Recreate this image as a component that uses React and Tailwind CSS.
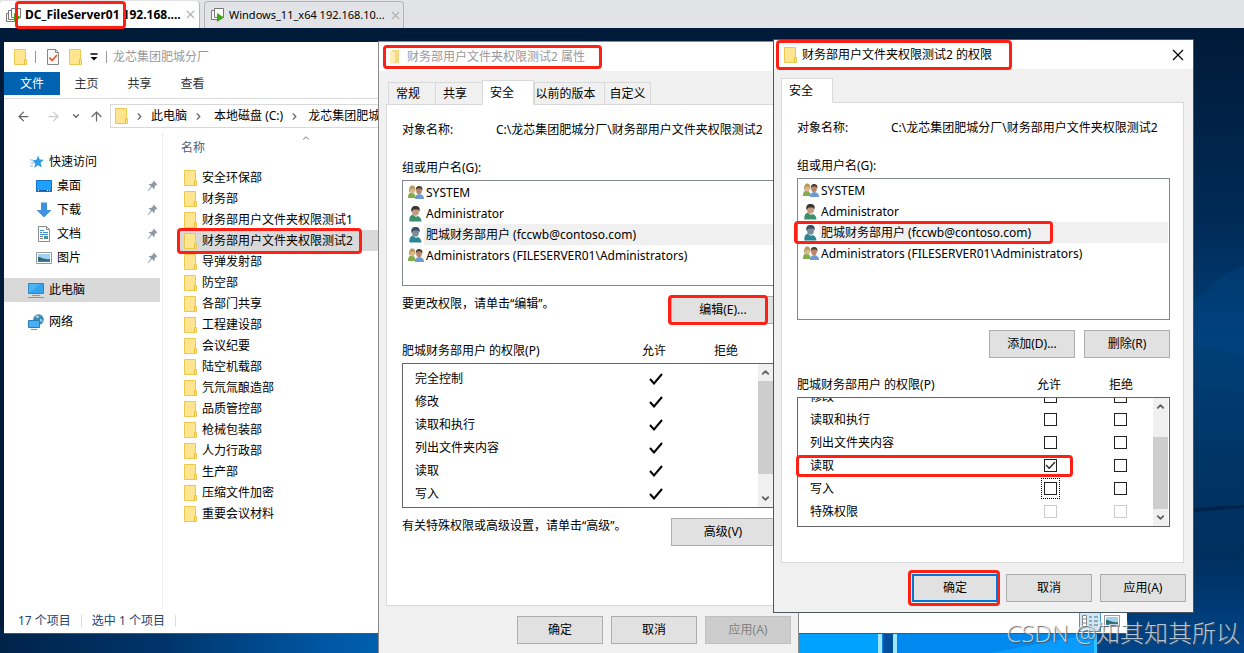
import React, { useState } from 'react';
import { ArrowLeft, ArrowRight, ArrowUp, ChevronDown, ChevronRight, ChevronUp, X } from 'lucide-react';

const FILES = [
    '安全环保部',
    '财务部',
    '财务部用户文件夹权限测试1',
    '财务部用户文件夹权限测试2',
    '导弹发射部',
    '防空部',
    '各部门共享',
    '工程建设部',
    '会议纪要',
    '陆空机载部',
    '氕氘氚酿造部',
    '品质管控部',
    '枪械包装部',
    '人力行政部',
    '生产部',
    '压缩文件加密',
    '重要会议材料',
];

const QUICK_ACCESS = [
    { name: '桌面', icon: <DesktopIcon /> },
    { name: '下载', icon: <DownloadIcon /> },
    { name: '文档', icon: <DocumentIcon /> },
    { name: '图片', icon: <PictureIcon /> },
];

const USERS = [
    { name: 'SYSTEM', group: true },
    { name: 'Administrator' },
    { name: '肥城财务部用户 (fccwb@contoso.com)', selected: true },
    { name: 'Administrators (FILESERVER01\\Administrators)', group: true },
];

const PATH = 'C:\\龙芯集团肥城分厂\\财务部用户文件夹权限测试2';

export default function App() {
    return (
        <div className="h-screen flex flex-col overflow-hidden text-xs text-black whitespace-nowrap font-['Noto_Sans','Noto_Sans_CJK_SC',sans-serif]">
            <VmTabs />
            <main className="relative flex-1 overflow-hidden bg-[#001b3a]">
                <Wallpaper />
                <Explorer />
                <PropertiesDialog />
                <PermissionsDialog />
                <div className="absolute right-1 bottom-1 text-2xl leading-8 font-light text-white/70 font-['Open_Sans','Noto_Sans_CJK_SC',sans-serif] [text-shadow:1px_1px_1px_#555]">
                    CSDN @知其知其所以
                </div>
            </main>
        </div>
    );
}

/* Console tabs of the virtual machines */
function VmTabs() {
    return (
        <nav className="h-7 shrink-0 flex items-end gap-1 bg-[#e1e3e6]">
            <a href="#dc" className="h-[27px] w-[200px] pl-1.5 pr-1 flex items-center gap-[3px] bg-white border-r border-[#b5b5b5] rounded-t font-bold">
                <VmIcon stacked />
                <span className="relative">
                    DC_FileServer01
                    <Mark className="-left-2.5 -right-1.5 -top-1.5 -bottom-1.5" />
                </span>
                <span>192.168....</span>
                <X size={13} className="ml-auto shrink-0 text-[#b0b0b0]" />
            </a>
            <a href="#win11" className="h-[27px] w-[200px] pl-1 pr-1 flex items-center gap-1 border border-b-0 border-[#b5b5b5] rounded-t bg-[#e1e3e6] text-[11px]">
                <VmIcon />
                <span>Windows_11_x64 192.168.10...</span>
                <X size={13} className="ml-auto shrink-0 text-[#b0b0b0]" />
            </a>
        </nav>
    );
}

function Explorer() {
    const [selected, setSelected] = useState(3);

    return (
        <section className="absolute left-1 right-[117px] top-3.5 bottom-[19px] flex flex-col bg-white border-b border-[#3a5a7a]">
            {/* Title bar */}
            <header className="h-[30px] shrink-0 pl-2.5 flex items-center text-[#999]">
                <FolderIcon />
                <i className="w-px h-3 bg-[#999] ml-2 mr-[11px]" />
                <CheckDocIcon />
                <span className="w-2.5" />
                <FolderIcon />
                <svg width="8" height="8" viewBox="0 0 8 8" className="ml-2 mr-2">
                    <path d="M0.500 1h7" stroke="#000" strokeWidth="1.500" />
                    <path d="M0.500 4h7L4 7.500z" fill="#000" />
                </svg>
                <i className="w-px h-3 bg-[#999] mr-1.5" />
                <span>龙芯集团肥城分厂</span>
            </header>

            {/* Ribbon */}
            <nav className="h-[27px] shrink-0 flex border-b border-[#dadbdc]">
                <button className="w-14 h-[23px] bg-[#0063b1] text-white">文件</button>
                {['主页', '共享', '查看'].map((tab) => (
                    <button key={tab} className="w-[53px] h-[23px] text-[#333]">{tab}</button>
                ))}
            </nav>

            {/* Address bar */}
            <div className="h-[34px] shrink-0 flex items-center pl-3 text-[#666]">
                <ArrowLeft size={15} />
                <ArrowRight size={15} className="ml-[15px] text-[#ccc]" />
                <ChevronDown size={10} strokeWidth={3} className="ml-2.5" />
                <ArrowUp size={15} className="ml-2" />
                <div className="flex-1 h-6 ml-1.5 pl-1 flex items-center border border-[#d9d9d9] text-black">
                    <FolderIcon />
                    <ChevronRight size={11} strokeWidth={2.500} className="mx-1.5 text-[#666]" />
                    <span>此电脑</span>
                    <ChevronRight size={11} strokeWidth={2.500} className="mx-1.5 text-[#666]" />
                    <span className="ml-1">本地磁盘 (C:)</span>
                    <ChevronRight size={11} strokeWidth={2.500} className="mx-1.5 text-[#666]" />
                    <span className="ml-0.5">龙芯集团肥城分厂</span>
                </div>
            </div>

            <div className="flex-1 min-h-0 flex">
                <aside className="w-[159px] shrink-0 pt-[17px] pr-0.5 border-r border-[#eee]">
                    <a href="#quick" className="h-6 pl-[26px] flex items-center gap-[5px]">
                        <StarIcon />
                        快速访问
                    </a>
                    {QUICK_ACCESS.map((item) => (
                        <a key={item.name} href="#quick" className="h-6 pl-8 pr-0.5 flex items-center gap-[5px]">
                            {item.icon}
                            {item.name}
                            <PinIcon />
                        </a>
                    ))}
                    <a href="#pc" className="h-6 mt-2 mb-2 pl-6 flex items-center gap-[5px] bg-[#d9d9d9]">
                        <ComputerIcon />
                        此电脑
                    </a>
                    <a href="#network" className="h-6 pl-6 flex items-center gap-[5px]">
                        <NetworkIcon />
                        网络
                    </a>
                </aside>

                <div className="flex-1 pl-[17px]">
                    <div className="h-[34px] flex">
                        <span className="pt-[7px] pl-px leading-4 text-[#44617f]">名称</span>
                        <ChevronUp size={10} className="ml-24 text-[#555]" />
                    </div>
                    <ul>
                        {FILES.map((name, i) => (
                            <li key={name}>
                                <button
                                    onClick={() => setSelected(i)}
                                    className={`w-full h-[21px] pl-1 flex items-center ${i === selected ? 'bg-[#d9d9d9]' : ''}`}
                                >
                                    <span className="relative flex items-center gap-[5px]">
                                        <FolderIcon />
                                        {name}
                                        {i === 3 && <Mark className="-left-[7px] -right-[9px] -top-[5px] -bottom-[5px]" />}
                                    </span>
                                </button>
                            </li>
                        ))}
                    </ul>
                </div>
            </div>

            {/* Status bar */}
            <footer className="h-6 shrink-0 pl-3.5 pr-1 flex items-center text-[#26466d]">
                <span>17 个项目</span>
                <i className="w-px h-3 bg-[#ddd] mx-2.5" />
                <span>选中 1 个项目</span>
                <i className="w-px h-3 bg-[#ddd] mx-2.5" />
                <button aria-label="详细信息" className="ml-auto w-[22px] h-[22px] grid place-items-center bg-[#cce8f6] border border-[#3f9fd5]">
                    <svg width="16" height="12" viewBox="0 0 16 12">
                        <path d="M0.500 0.500h4v11h-4zM0.500 4h4M0.500 8h4" fill="#fff" stroke="#888" />
                        <path d="M7 2h3M12 2h4M7 6h3M12 6h4M7 10h3M12 10h4" stroke="#666" />
                    </svg>
                </button>
                <button aria-label="大图标" className="w-[22px] h-[22px] grid place-items-center">
                    <PictureIcon />
                </button>
            </footer>
        </section>
    );
}

function PropertiesDialog() {
    const rows = ['完全控制', '修改', '读取和执行', '列出文件夹内容', '读取', '写入'];

    return (
        <section className="absolute left-[378px] top-[13px] w-[421px] bg-[#f0f0f0] border border-[#8a8a8a]">
            <header className="h-[29px] pl-2.5 flex items-center bg-white text-[#999]">
                <h2 className="relative flex items-center gap-[5px]">
                    <FolderIcon open />
                    财务部用户文件夹权限测试2 属性
                    <Mark className="-left-1.5 -right-[17px] -top-1 -bottom-1" />
                </h2>
            </header>
            <div className="px-[7px] pt-[9px] pb-[9px]">
                <div className="flex items-end pl-0.5">
                    <Tab className="w-12">常规</Tab>
                    <Tab className="w-12">共享</Tab>
                    <Tab active className="w-[52px]">安全</Tab>
                    <Tab className="w-[71px]">以前的版本</Tab>
                    <Tab className="w-[47px]">自定义</Tab>
                </div>
                <div className="-mt-px px-[15px] pt-[17px] pb-[59px] bg-white border border-[#d9d9d9]">
                    <ObjectName />
                    <UserList className="h-[106px]" />
                    <div className="mt-2.5 flex items-start justify-between">
                        <p className="leading-4">要更改权限，请单击“编辑”。</p>
                        <div className="relative">
                            <PushButton wide>编辑(E)...</PushButton>
                            <Mark className="-left-[3px] right-[7px] -top-px -bottom-px" />
                        </div>
                    </div>
                    <PermissionHead />
                    <div className="mt-1 h-[145px] flex border border-[#646464] overflow-hidden">
                        <div className="flex-1 pt-[3px]">
                            <table className="w-full table-fixed">
                                <tbody>
                                    {rows.map((row) => (
                                        <tr key={row} className="h-[23px]">
                                            <th scope="row" className="pl-3 text-left font-normal">{row}</th>
                                            <td className="w-[75px]">
                                                <svg width="14" height="12" viewBox="0 0 14 12" className="mx-auto">
                                                    <path d="M1 6l4 4.500L13 1" fill="none" stroke="#000" strokeWidth="2" />
                                                </svg>
                                            </td>
                                            <td className="w-[65px]" />
                                        </tr>
                                    ))}
                                </tbody>
                            </table>
                        </div>
                        <ScrollBar>
                            <div className="h-[93px] bg-[#cdcdcd]" />
                            <div className="flex-1" />
                        </ScrollBar>
                    </div>
                    <div className="mt-2.5 flex items-start justify-between">
                        <p className="leading-4">有关特殊权限或高级设置，请单击“高级”。</p>
                        <PushButton wide>高级(V)</PushButton>
                    </div>
                </div>
                <div className="mt-2.5 flex justify-end gap-2">
                    <PushButton>确定</PushButton>
                    <PushButton>取消</PushButton>
                    <PushButton disabled>应用(A)</PushButton>
                </div>
            </div>
        </section>
    );
}

function PermissionsDialog() {
    const rows = [
        { name: '修改' },
        { name: '读取和执行' },
        { name: '列出文件夹内容' },
        { name: '读取', allow: true, marked: true },
        { name: '写入', focused: true },
        { name: '特殊权限', disabled: true },
    ];

    return (
        <section className="absolute left-[773px] top-[11px] w-[421px] bg-[#f0f0f0] border border-[#4a5560]">
            <header className="h-[29px] pl-2.5 pr-[9px] flex items-center justify-between bg-white">
                <h2 className="relative flex items-center gap-[5px]">
                    <FolderIcon />
                    财务部用户文件夹权限测试2 的权限
                    <Mark className="-left-2 -right-5 -top-[7px] -bottom-[7px]" />
                </h2>
                <button aria-label="关闭">
                    <svg width="12" height="12" viewBox="0 0 12 12">
                        <path d="M1 1l10 10M11 1L1 11" stroke="#000" strokeWidth="1.200" />
                    </svg>
                </button>
            </header>
            <div className="px-[7px] pt-[9px] pb-2.5">
                <div className="flex items-end">
                    <Tab active className="w-[52px]">安全</Tab>
                </div>
                <div className="-mt-px mr-0.5 pl-[15px] pr-[13px] pt-[17px] pb-[35px] bg-white border border-[#d9d9d9]">
                    <ObjectName />
                    <UserList className="h-[142px]" marked />
                    <div className="mt-2.5 flex justify-end gap-[9px]">
                        <PushButton>添加(D)...</PushButton>
                        <PushButton>删除(R)</PushButton>
                    </div>
                    <PermissionHead />
                    {/* Scrolled to the end, the first row is cut by the frame */}
                    <div className="mt-1 h-[130px] flex border border-[#646464]">
                        <div className="flex-1 flex items-end pb-[3px] overflow-y-clip">
                            <table className="w-full table-fixed">
                                <tbody>
                                    {rows.map((row) => (
                                        <tr key={row.name} className="relative h-[23px]">
                                            <th scope="row" className="pl-3 text-left font-normal">
                                                {row.name}
                                                {row.marked && <Mark className="-left-0.5 right-20 top-px bottom-0" />}
                                            </th>
                                            <td className="w-[75px]">
                                                <CheckBox
                                                    label={`${row.name} 允许`}
                                                    checked={row.allow}
                                                    focused={row.focused}
                                                    disabled={row.disabled}
                                                />
                                            </td>
                                            <td className="w-[65px]">
                                                <CheckBox label={`${row.name} 拒绝`} disabled={row.disabled} />
                                            </td>
                                        </tr>
                                    ))}
                                </tbody>
                            </table>
                        </div>
                        <ScrollBar>
                            <div className="flex-1" />
                            <div className="h-[72px] bg-[#cdcdcd]" />
                        </ScrollBar>
                    </div>
                </div>
                <div className="mt-[11px] flex justify-end gap-2">
                    <div className="relative">
                        <PushButton primary>确定</PushButton>
                        <Mark className="-left-1 -right-0.5 -top-1 -bottom-1" />
                    </div>
                    <PushButton>取消</PushButton>
                    <PushButton>应用(A)</PushButton>
                </div>
            </div>
        </section>
    );
}

function Tab({ active, className, children }) {
    return (
        <button
            className={`shrink-0 border border-[#d9d9d9] ${className} ${active ? 'relative h-[25px] pr-3 bg-white border-b-white' : 'h-[23px] -mr-px pr-2 last:pr-0 bg-[#f0f0f0]'}`}
        >
            {children}
        </button>
    );
}

function ObjectName() {
    return (
        <>
            <dl className="flex leading-4">
                <dt className="w-[94px]">对象名称:</dt>
                <dd>{PATH}</dd>
            </dl>
            <p className="mt-[22px] leading-4">组或用户名(G):</p>
        </>
    );
}

function UserList({ className, marked }) {
    return (
        <ul className={`mt-1 p-px border border-[#828790] ${className}`}>
            {USERS.map((user) => (
                <li key={user.name} className="h-[21px] pl-[3px] flex items-center">
                    <span className="w-[17px]">{user.group ? <GroupIcon /> : <UserIcon blue={user.selected} />}</span>
                    <span className={`flex-1 h-full pl-0.5 leading-[21px] ${user.selected ? 'bg-[#f0f0f0]' : ''}`}>
                        <span className="relative inline-block h-full">
                            {user.name}
                            {marked && user.selected && <Mark className="-left-[27px] -right-[22px] -top-px -bottom-px" />}
                        </span>
                    </span>
                </li>
            ))}
        </ul>
    );
}

function PermissionHead() {
    return (
        <div className="mt-[19px] pr-[13px] flex leading-4">
            <span className="flex-1">肥城财务部用户 的权限(P)</span>
            <span className="w-[72px] text-center">允许</span>
            <span className="w-[72px] text-center">拒绝</span>
        </div>
    );
}

function PushButton({ wide, primary, disabled, children }) {
    return (
        <button
            disabled={disabled}
            className={`block h-7 ${wide ? 'w-[104px]' : 'w-[86px]'} ${primary
                ? 'bg-[#e1e1e1] border-2 border-[#0078d7]'
                : disabled
                    ? 'bg-[#ccc] border border-[#bfbfbf] text-[#838383]'
                    : 'bg-[#e1e1e1] border border-[#adadad]'
                }`}
        >
            {children}
        </button>
    );
}

function CheckBox({ label, checked, focused, disabled }) {
    return (
        <label className={`relative mx-auto flex w-[19px] h-[21px] items-center justify-center ${focused ? 'border border-dotted border-black' : ''}`}>
            <input
                type="checkbox"
                aria-label={label}
                defaultChecked={checked}
                disabled={disabled}
                className="peer appearance-none size-[13px] bg-white border border-[#222] disabled:border-[#ccc]"
            />
            <svg viewBox="0 0 13 13" className="absolute size-[13px] hidden peer-checked:block pointer-events-none">
                <path d="M2 6l3.200 3.200L11 3" fill="none" stroke="#222" strokeWidth="1.300" />
            </svg>
        </label>
    );
}

function ScrollBar({ children }) {
    return (
        <div className="w-[15px] mr-px flex flex-col bg-[#f0f0f0] text-[#606060]">
            <div className="h-[17px] grid place-items-center"><ChevronUp size={11} strokeWidth={4} /></div>
            {children}
            <div className="h-[17px] grid place-items-center"><ChevronDown size={11} strokeWidth={4} /></div>
        </div>
    );
}

/* Red frame around the spot to look at */
function Mark({ className }) {
    return <span className={`absolute z-10 border-3 border-[#ff2015] rounded-sm pointer-events-none ${className}`} />;
}

function Wallpaper() {
    return (
        <svg className="absolute inset-0 w-full h-full" viewBox="0 0 1244 625" preserveAspectRatio="none">
            <defs>
                <linearGradient id="floor" x1="0" x2="1" y1="0" y2="0">
                    <stop offset="0" stopColor="#00234a" />
                    <stop offset="0.150" stopColor="#00356b" />
                    <stop offset="0.300" stopColor="#0058a5" />
                    <stop offset="0.640" stopColor="#0090f5" />
                    <stop offset="0.780" stopColor="#0089ee" />
                </linearGradient>
                <linearGradient id="side" x1="0" x2="0" y1="0" y2="1">
                    <stop offset="0" stopColor="#001a38" />
                    <stop offset="0.300" stopColor="#002a56" />
                    <stop offset="0.500" stopColor="#003f78" />
                    <stop offset="0.720" stopColor="#003463" />
                    <stop offset="0.840" stopColor="#002f5e" />
                    <stop offset="1" stopColor="#00458a" />
                </linearGradient>
            </defs>
            <rect x="0" y="600" width="1100" height="25" fill="url(#floor)" />
            <rect x="1096" width="148" height="625" fill="url(#side)" />
            <path d="M1193 275l30-28 21-10v92l-51-14z" fill="#004a8c" opacity="0.300" />
            <path d="M1193 480l51-3v3l-51 4z" fill="#00234a" />
            <path d="M798 605h80v20h-80z" fill="#00a2ff" />
            <path d="M897 605h199v20H990l106-20z" fill="#0a9bff" />
            <path d="M883 600h10v25h-10z" fill="#0050a0" />
            <path d="M878 600h4v25h-4zM893 600h4v25h-4z" fill="#9fe6ff" />
            <path d="M1094 600h3v25h-3z" fill="#2fc4ff" />
        </svg>
    );
}

function VmIcon({ stacked }) {
    return (
        <svg width="16" height="16" viewBox="0 0 16 16" className="shrink-0">
            <g fill="#fff" stroke="#777">
                {stacked && <path d="M0.500 6.500h8v8h-8z" />}
                <path d="M2.500 3.500h9v9h-9z" />
                <path d="M5.500 1.500h9v9h-9z" />
            </g>
            <path d="M8 6l7 4.500L8 15z" fill="#3fa60f" />
        </svg>
    );
}

function FolderIcon({ open }) {
    if (open) {
        return (
            <svg width="13" height="16" viewBox="0 0 13 16" className="shrink-0 opacity-70">
                <path d="M3 1h7v13H3z" fill="#f3c94f" />
                <path d="M1 2l5 1v12l-5-1z" fill="#ffe696" />
            </svg>
        );
    }
    return (
        <svg width="13" height="16" viewBox="0 0 13 16" className="shrink-0">
            <path d="M0.500 0.500h11v10h1v5h-12z" fill="#ffe590" stroke="#ecc84f" />
            <path d="M10.500 15v-4.500h1" fill="none" stroke="#e6bd3c" />
        </svg>
    );
}

function CheckDocIcon() {
    return (
        <svg width="12" height="16" viewBox="0 0 12 16" className="shrink-0">
            <path d="M0.500 0.500h8l3 3v12h-11z" fill="#fafafa" stroke="#888" />
            <path d="M8.500 0.500v3h3" fill="none" stroke="#888" />
            <path d="M2.500 8.500l2.500 3 5-5.500" fill="none" stroke="#e8531f" strokeWidth="1.600" />
        </svg>
    );
}

function StarIcon() {
    return (
        <svg width="14" height="14" viewBox="0 0 14 14" className="shrink-0">
            <path d="M8 0.500l1.700 4 4.100 0.300-3.200 2.900 1.200 4.800-3.800-2.300L4.300 13l1-4.400L2.500 5.500l4.100-0.700z" fill="#2d9be6" />
            <path d="M0 5h3M1 8h3.500M0 11h3" stroke="#79c1f0" />
        </svg>
    );
}

function DesktopIcon() {
    return (
        <svg width="16" height="16" viewBox="0 0 16 16" className="shrink-0">
            <path d="M0.500 2.500h15v11H0.500z" fill="#1ea0ff" stroke="#1272c2" />
            <path d="M1 12.500h14" stroke="#0a5fa8" />
            <path d="M2 12.500h1M11 12.500h1M13 12.500h1" stroke="#fff" />
        </svg>
    );
}

function DownloadIcon() {
    return (
        <svg width="16" height="16" viewBox="0 0 16 16" className="shrink-0">
            <path d="M5 0.500h6V8h4.500L8 15.500 0.500 8H5z" fill="#3f93dd" />
        </svg>
    );
}

function DocumentIcon() {
    return (
        <svg width="16" height="16" viewBox="0 0 16 16" className="shrink-0">
            <path d="M2.500 0.500h8l3 3v12h-11z" fill="#fff" stroke="#8a8a8a" />
            <path d="M10.500 0.500v3h3" fill="none" stroke="#8a8a8a" />
            <path d="M4 4.500h4M4 6.500h2M7 6.500h5M4 8.500h8" stroke="#3792cc" />
            <path d="M4 10.500h3M4 12.500h3" stroke="#777" />
            <path d="M8 10h4v3H8z" fill="#4b8e9f" />
        </svg>
    );
}

function PictureIcon() {
    return (
        <svg width="16" height="16" viewBox="0 0 16 16" className="shrink-0">
            <path d="M0.500 2.500h15v11H0.500z" fill="#fff" stroke="#999" />
            <path d="M2 4h12v8H2z" fill="#9fd0f5" />
            <path d="M2 7c4 0 5 3 12 2v3H2z" fill="#2f6b5f" />
            <path d="M2 10.500h12V12H2z" fill="#3c78b8" />
        </svg>
    );
}

function PinIcon() {
    return (
        <svg width="11" height="12" viewBox="0 0 11 12" className="ml-auto">
            <path d="M6.500 0.500l4 4-1.500 0.500-1.500 2v2.500L5 7 1 11.500 0.500 11 4 6.500 1.500 4H4l2-1.500z" fill="#8e99a3" />
        </svg>
    );
}

function ComputerIcon() {
    return (
        <svg width="16" height="16" viewBox="0 0 16 16" className="shrink-0">
            <path d="M0.500 1.500h15v10H0.500z" fill="#4ab4f5" stroke="#2b86c2" />
            <path d="M1 11L12 2h3v9z" fill="#35a3ec" />
            <path d="M4 13.500h8M0 15.500h16" stroke="#8197a8" />
        </svg>
    );
}

function NetworkIcon() {
    return (
        <svg width="16" height="16" viewBox="0 0 16 16" className="shrink-0">
            <circle cx="10.500" cy="5.500" r="5.300" fill="#3e8bb5" />
            <path d="M7 2.500c2-1.500 4-1 4 0.500S8 4 7 2.500zM12 5c2 0 3 1 2 3l-2-1z" fill="#a9d3e6" />
            <path d="M0.500 6.500h11v7H0.500z" fill="#45b0f5" stroke="#2b7cb8" />
            <path d="M3 15.500h6" stroke="#8197a8" />
        </svg>
    );
}

function UserIcon({ blue }) {
    return (
        <svg width="16" height="16" viewBox="0 0 16 16">
            <path d="M2.500 15.500C2 11 3.500 9.500 5.500 8.500L9 11l1.500-1c2.500 0.500 4 3 4 5.500z" fill={blue ? '#2c8793' : '#3b8f6a'} />
            <ellipse cx="8.500" cy="5.500" rx="3.400" ry="4.300" fill={blue ? '#7a8d96' : '#c79a7d'} />
            <path d="M4.500 6C3.500 1 6 0 8.500 0s5 1 4 5.500L11 3.500H6.500z" fill={blue ? '#3b4e63' : '#3a3430'} />
        </svg>
    );
}

function GroupIcon() {
    return (
        <svg width="17" height="16" viewBox="0 0 17 16">
            <path d="M1 13c0-4 1-5 3.500-5.500C7 8 8.500 9 8.500 13z" fill="#7fae4b" />
            <ellipse cx="5.300" cy="4.800" rx="2.700" ry="3.600" fill="#dfb68f" />
            <path d="M2.200 8C1.800 3 2.800 0.500 5.300 0.500S8.800 3 8.300 7L7 3.500 3.800 4z" fill="#b59a5c" />
            <path d="M8 14c0-4 1.500-4.500 4.500-5 2.500 0.500 4.500 1.500 4.500 5z" fill="#6d9bd1" />
            <ellipse cx="12" cy="5.500" rx="2.800" ry="3.800" fill="#b98565" />
            <path d="M9 5C8.500 2 10 1 12 1s4 1 3.300 4.800L13.800 3.500h-3.300z" fill="#4b4038" />
        </svg>
    );
}
